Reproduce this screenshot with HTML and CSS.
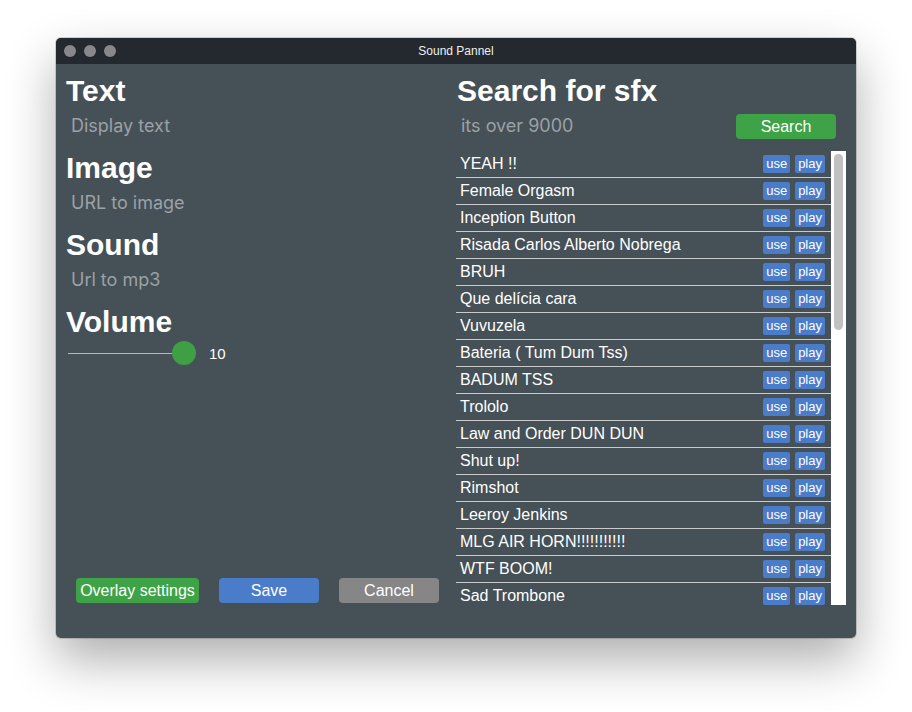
FILE: index.html
```html
<!DOCTYPE html>
<html>
<head>
<meta charset="utf-8">
<title>Sound Pannel</title>
<link rel="stylesheet" href="styles.css">
</head>
<body>
<div class="window">
  <div class="titlebar">
    <div class="dots"><span class="dot"></span><span class="dot"></span><span class="dot"></span></div>
    <div class="title">Sound Pannel</div>
  </div>
  <div class="content">
    <div class="left">
      <div class="field">
        <h2 class="heading">Text</h2>
        <input class="input" placeholder="Display text">
      </div>
      <div class="field">
        <h2 class="heading">Image</h2>
        <input class="input" placeholder="URL to image">
      </div>
      <div class="field">
        <h2 class="heading">Sound</h2>
        <input class="input" placeholder="Url to mp3">
      </div>
      <div class="field">
        <h2 class="heading">Volume</h2>
        <div class="slider-row">
          <div class="slider"><div class="track"></div><div class="thumb"></div></div>
          <span class="value">10</span>
        </div>
      </div>
      <div class="actions">
        <button class="btn green overlay">Overlay settings</button>
        <button class="btn blue wide">Save</button>
        <button class="btn gray wide">Cancel</button>
      </div>
    </div>
    <div class="right">
      <h2 class="heading search-heading">Search for sfx</h2>
      <div class="search-row">
        <input class="input" placeholder="its over 9000">
        <button class="btn green wide search-btn">Search</button>
      </div>
      <div class="list">
        <div class="rows">
          <div class="row"><span class="name">YEAH !!</span><span class="mini">use</span><span class="mini">play</span></div>
          <div class="row"><span class="name">Female Orgasm</span><span class="mini">use</span><span class="mini">play</span></div>
          <div class="row"><span class="name">Inception Button</span><span class="mini">use</span><span class="mini">play</span></div>
          <div class="row"><span class="name">Risada Carlos Alberto Nobrega</span><span class="mini">use</span><span class="mini">play</span></div>
          <div class="row"><span class="name">BRUH</span><span class="mini">use</span><span class="mini">play</span></div>
          <div class="row"><span class="name">Que delícia cara</span><span class="mini">use</span><span class="mini">play</span></div>
          <div class="row"><span class="name">Vuvuzela</span><span class="mini">use</span><span class="mini">play</span></div>
          <div class="row"><span class="name">Bateria ( Tum Dum Tss)</span><span class="mini">use</span><span class="mini">play</span></div>
          <div class="row"><span class="name">BADUM TSS</span><span class="mini">use</span><span class="mini">play</span></div>
          <div class="row"><span class="name">Trololo</span><span class="mini">use</span><span class="mini">play</span></div>
          <div class="row"><span class="name">Law and Order DUN DUN</span><span class="mini">use</span><span class="mini">play</span></div>
          <div class="row"><span class="name">Shut up!</span><span class="mini">use</span><span class="mini">play</span></div>
          <div class="row"><span class="name">Rimshot</span><span class="mini">use</span><span class="mini">play</span></div>
          <div class="row"><span class="name">Leeroy Jenkins</span><span class="mini">use</span><span class="mini">play</span></div>
          <div class="row"><span class="name">MLG AIR HORN!!!!!!!!!!!</span><span class="mini">use</span><span class="mini">play</span></div>
          <div class="row"><span class="name">WTF BOOM!</span><span class="mini">use</span><span class="mini">play</span></div>
          <div class="row"><span class="name">Sad Trombone</span><span class="mini">use</span><span class="mini">play</span></div>
        </div>
        <div class="scrollbar"><div class="scroll-thumb"></div></div>
      </div>
    </div>
  </div>
</div>
</body>
</html>
```
FILE: styles.css
```css
* { box-sizing: border-box; }
html, body { margin: 0; padding: 0; background: #ffffff; }
body {
  padding: 38px 0 0 56px;
  min-height: 712px;
  font-family: "Liberation Sans", Arial, sans-serif;
}

.window {
  width: 800px;
  height: 600px;
  border-radius: 5px;
  overflow: hidden;
  background: #465057;
  box-shadow: 0 22px 50px rgba(0,0,0,0.32), 0 0 0 1px rgba(0,0,0,0.15);
  display: flex;
  flex-direction: column;
}

.titlebar {
  height: 26px;
  background: #23292f;
  display: flex;
  align-items: center;
  position: relative;
  flex: none;
}
.dots { display: flex; gap: 8px; padding-left: 8px; }
.dot { width: 12px; height: 12px; border-radius: 50%; background: #88878c; }
.title {
  position: absolute; left: 0; right: 0; top: 0; bottom: 0;
  display: flex; align-items: center; justify-content: center;
  color: #eeeeee; font-size: 12px;
  font-family: "Liberation Sans", Arial, sans-serif;
}

.content { flex: 1; display: flex; min-height: 0; }
.left {
  width: 400px;
  padding: 11px 0 35px 10px;
  display: flex; flex-direction: column;
}
.right {
  width: 390px;
  padding: 11px 0 33px 0;
  display: flex; flex-direction: column;
}

.heading {
  margin: 0;
  height: 32px;
  line-height: 32px;
  font-size: 30px;
  font-weight: bold;
  color: #ffffff;
}
.search-heading { padding-left: 1px; }

.field { margin-bottom: 12px; }
.input {
  display: block;
  width: 100%;
  height: 30px;
  margin-top: 3px;
  border: none;
  outline: none;
  background: transparent;
  padding: 0 0 0 5px;
  font-family: Inter, "Noto Sans", sans-serif;
  font-size: 18px;
  color: #ffffff;
}
.input::placeholder { color: #9ba1a6; }

.slider-row { display: flex; align-items: center; height: 30px; padding-left: 2px; }
.slider { position: relative; width: 128px; height: 24px; display: flex; align-items: center; }
.track { width: 116px; height: 1px; background: #b4b8bb; }
.thumb { position: absolute; right: 0; top: 0; width: 24px; height: 24px; border-radius: 50%; background: #3e9f44; }
.value { color: #ffffff; font-size: 15px; margin-left: 13px; }

.actions { margin-top: auto; display: flex; gap: 20px; padding-left: 10px; }
.btn {
  height: 25px;
  border: none;
  border-radius: 4px;
  color: #ffffff;
  font-family: "Liberation Sans", Arial, sans-serif;
  font-size: 16px;
  padding: 0;
}
.overlay { width: 123px; }
.wide { width: 100px; }
.green { background: #3ea246; }
.blue { background: #4a7cca; }
.gray { background: #868686; }

.search-row { display: flex; align-items: flex-start; height: 33px; padding-right: 10px; gap: 10px; }
.search-row .input { flex: 1; }
.search-btn { margin-top: 7px; }

.list {
  margin-top: 11px;
  flex: 1;
  min-height: 0;
  display: flex;
}
.rows { flex: 1; overflow: hidden; }
.row {
  height: 27px;
  border-bottom: 1px solid #c8cacc;
  display: flex;
  align-items: flex-start;
  padding: 4px 6px 0 4px;
  gap: 5px;
}
.name { flex: 1; color: #ffffff; font-size: 16px; line-height: 18px; }
.mini {
  height: 18px;
  line-height: 18px;
  padding: 0 3px;
  border-radius: 2px;
  background: #4a7cca;
  color: #ffffff;
  font-size: 13px;
}
.scrollbar { width: 15px; background: #ffffff; padding: 3px 3px 0 3px; }
.scroll-thumb { width: 9px; height: 176px; border-radius: 5px; background: #c1c1c1; }
```
